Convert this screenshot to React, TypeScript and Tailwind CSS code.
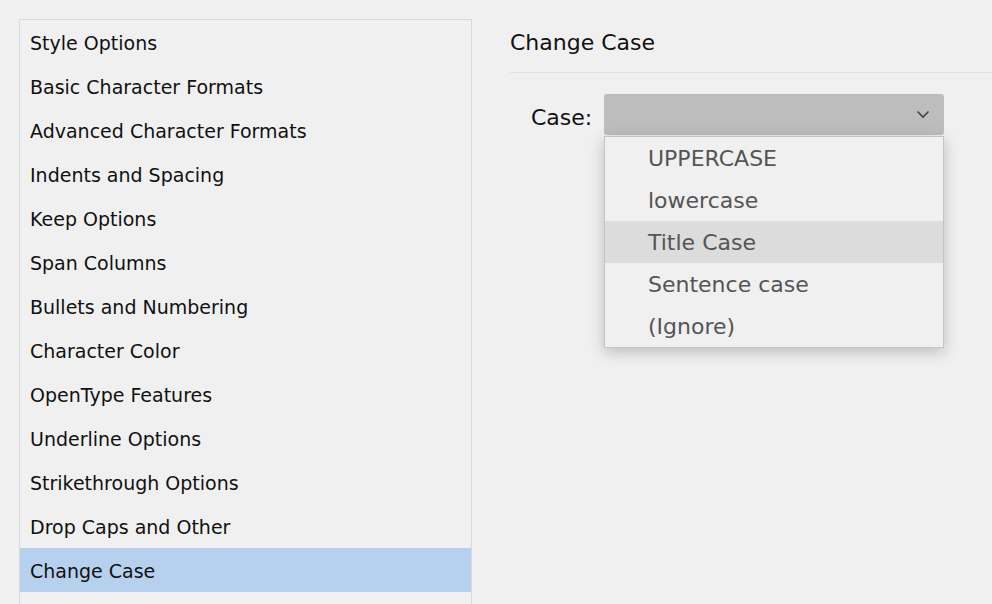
import React from "react";

const items = [
  "Style Options",
  "Basic Character Formats",
  "Advanced Character Formats",
  "Indents and Spacing",
  "Keep Options",
  "Span Columns",
  "Bullets and Numbering",
  "Character Color",
  "OpenType Features",
  "Underline Options",
  "Strikethrough Options",
  "Drop Caps and Other",
  "Change Case",
];

const options = ["UPPERCASE", "lowercase", "Title Case", "Sentence case", "(Ignore)"];

export default function App() {
  return (
    <div
      className="w-[992px] h-[604px] overflow-hidden bg-[#f0f0f0] flex text-[#111]"
      style={{ fontFamily: '"DejaVu Sans", Verdana, sans-serif' }}
    >
      <div className="pl-[19px] pt-[19px] w-[472px] shrink-0">
        <div className="border-[1.5px] border-b-0 border-[#dadada] h-[600px]">
          {items.map((it) => (
            <div
              key={it}
              className={`h-[44px] flex items-center pt-[2px] pl-[10px] text-[19px] ${
                it === "Change Case" ? "bg-[#b6d1ee]" : ""
              }`}
            >
              {it}
            </div>
          ))}
        </div>
      </div>
      <div className="flex-1 pl-[38px] pt-[23px]">
        <div className="h-[40px] text-[22px] leading-[40px]">Change Case</div>
        <div className="h-px bg-[#e2e2e2] mt-[9px]" />
        <div className="flex items-start mt-[21px] pl-[21px]">
          <div className="text-[22px] h-[41px] flex items-center pt-[5px] w-[73px]">Case:</div>
          <div className="relative">
            <div className="w-[340px] h-[41px] rounded-[3px] bg-[#bdbdbd] flex items-center justify-end pr-[14px]">
              <svg width="14" height="9" viewBox="0 0 14 9" fill="none">
                <path d="M1.5 1.5 L7 7 L12.5 1.5" stroke="#444" strokeWidth="1.6" />
              </svg>
            </div>
            <div className="absolute left-0 top-[42px] w-[340px] bg-[#f0f0f0] border border-[#c4c4c4] shadow-[0_4px_14px_rgba(0,0,0,0.22)]">
              {options.map((o) => (
                <div
                  key={o}
                  className={`h-[42px] flex items-center pl-[43px] text-[22px] text-[#555] ${
                    o === "Title Case" ? "bg-[#dcdcdc]" : ""
                  }`}
                >
                  {o}
                </div>
              ))}
            </div>
          </div>
        </div>
      </div>
    </div>
  );
}
